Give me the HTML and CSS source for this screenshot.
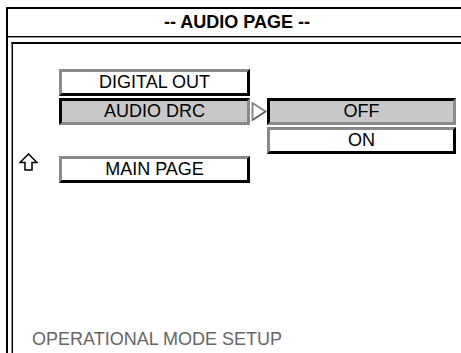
FILE: index.html
```html
<!DOCTYPE html>
<html>
<head>
<meta charset="utf-8">
<link rel="stylesheet" href="styles.css">
</head>
<body>
<div class="frame">
  <div class="title">-- AUDIO PAGE --</div>
  <div class="panel">
    <div class="menu">
      <div class="btn r1 c2">DIGITAL OUT</div>
      <div class="btn sel r2 c2">AUDIO DRC</div>
      <div class="ptr r2 c3">
        <svg width="16" height="19" viewBox="0 0 16 19"><polygon points="1.5,1 14.5,9.5 1.5,18" fill="#fff" stroke="#8a8a8a" stroke-width="2"/><polyline points="14.5,9.5 1.5,18" fill="none" stroke="#444" stroke-width="1"/></svg>
      </div>
      <div class="btn sel r2 c4">OFF</div>
      <div class="btn r3 c4">ON</div>
      <div class="up r4 c1">
        <svg class="upicon" width="19" height="18" viewBox="0 0 19 18"><polygon points="9.5,1 18,9.5 13,9.5 13,17 6,17 6,9.5 1,9.5" fill="#fff" stroke="#000" stroke-width="1.5" stroke-linejoin="miter"/></svg>
      </div>
      <div class="btn r4 c2">MAIN PAGE</div>
    </div>
    <div class="footer">OPERATIONAL MODE SETUP</div>
  </div>
</div>
</body>
</html>
```

FILE: styles.css
```css
html, body {
  margin: 0;
  padding: 0;
  background: #fff;
  overflow: hidden;
  width: 461px;
  height: 353px;
}
body {
  font-family: "Liberation Sans", Arial, sans-serif;
  color: #000;
}
.frame {
  margin: 7px 0 0 6px;
  width: 470px;
  height: 360px;
  border-top: 2px solid #000;
  border-left: 2px solid #000;
  box-sizing: border-box;
  display: flex;
  flex-direction: column;
}
.title {
  height: 27px;
  line-height: 26px;
  font-weight: bold;
  font-size: 18px;
  text-align: center;
  padding-right: 10px;
  border-bottom: 1px solid #000;
  box-shadow: 0 1px 0 #999;
}
.panel {
  margin: 5px 0 0 3px;
  border-top: 2px solid #000;
  border-left: 1px solid #8a8a8a;
  box-shadow: inset 1px 0 0 #000;
  flex: 1;
  display: flex;
  flex-direction: column;
}
.menu {
  margin-top: 25px;
  display: grid;
  grid-template-columns: 47px 191px 17px 189px;
  grid-template-rows: 27px 27px 27px 27px;
  row-gap: 2px;
}
.btn {
  box-sizing: border-box;
  border: 3px solid;
  border-color: #8a8a8a #000 #000 #8a8a8a;
  background: #fff;
  font-size: 18px;
  line-height: 21px;
  text-align: center;
}
.btn.sel {
  border-color: #000 #8a8a8a #8a8a8a #000;
  background: #c8c8c8;
}
.r1 { grid-row: 1; }
.r2 { grid-row: 2; }
.r3 { grid-row: 3; }
.r4 { grid-row: 4; }
.c1 { grid-column: 1; }
.c2 { grid-column: 2; }
.c3 { grid-column: 3; }
.c4 { grid-column: 4; }
.ptr {
  display: flex;
  align-items: center;
  padding-left: 1px;
}
.up {
  display: flex;
  align-items: flex-start;
  padding-left: 7px;
  margin-top: -3px;
}
.upicon {
  flex-shrink: 0;
  display: block;
}
.footer {
  margin-top: auto;
  margin-bottom: 17px;
  padding-left: 20px;
  color: #666;
  font-size: 18px;
}
```
